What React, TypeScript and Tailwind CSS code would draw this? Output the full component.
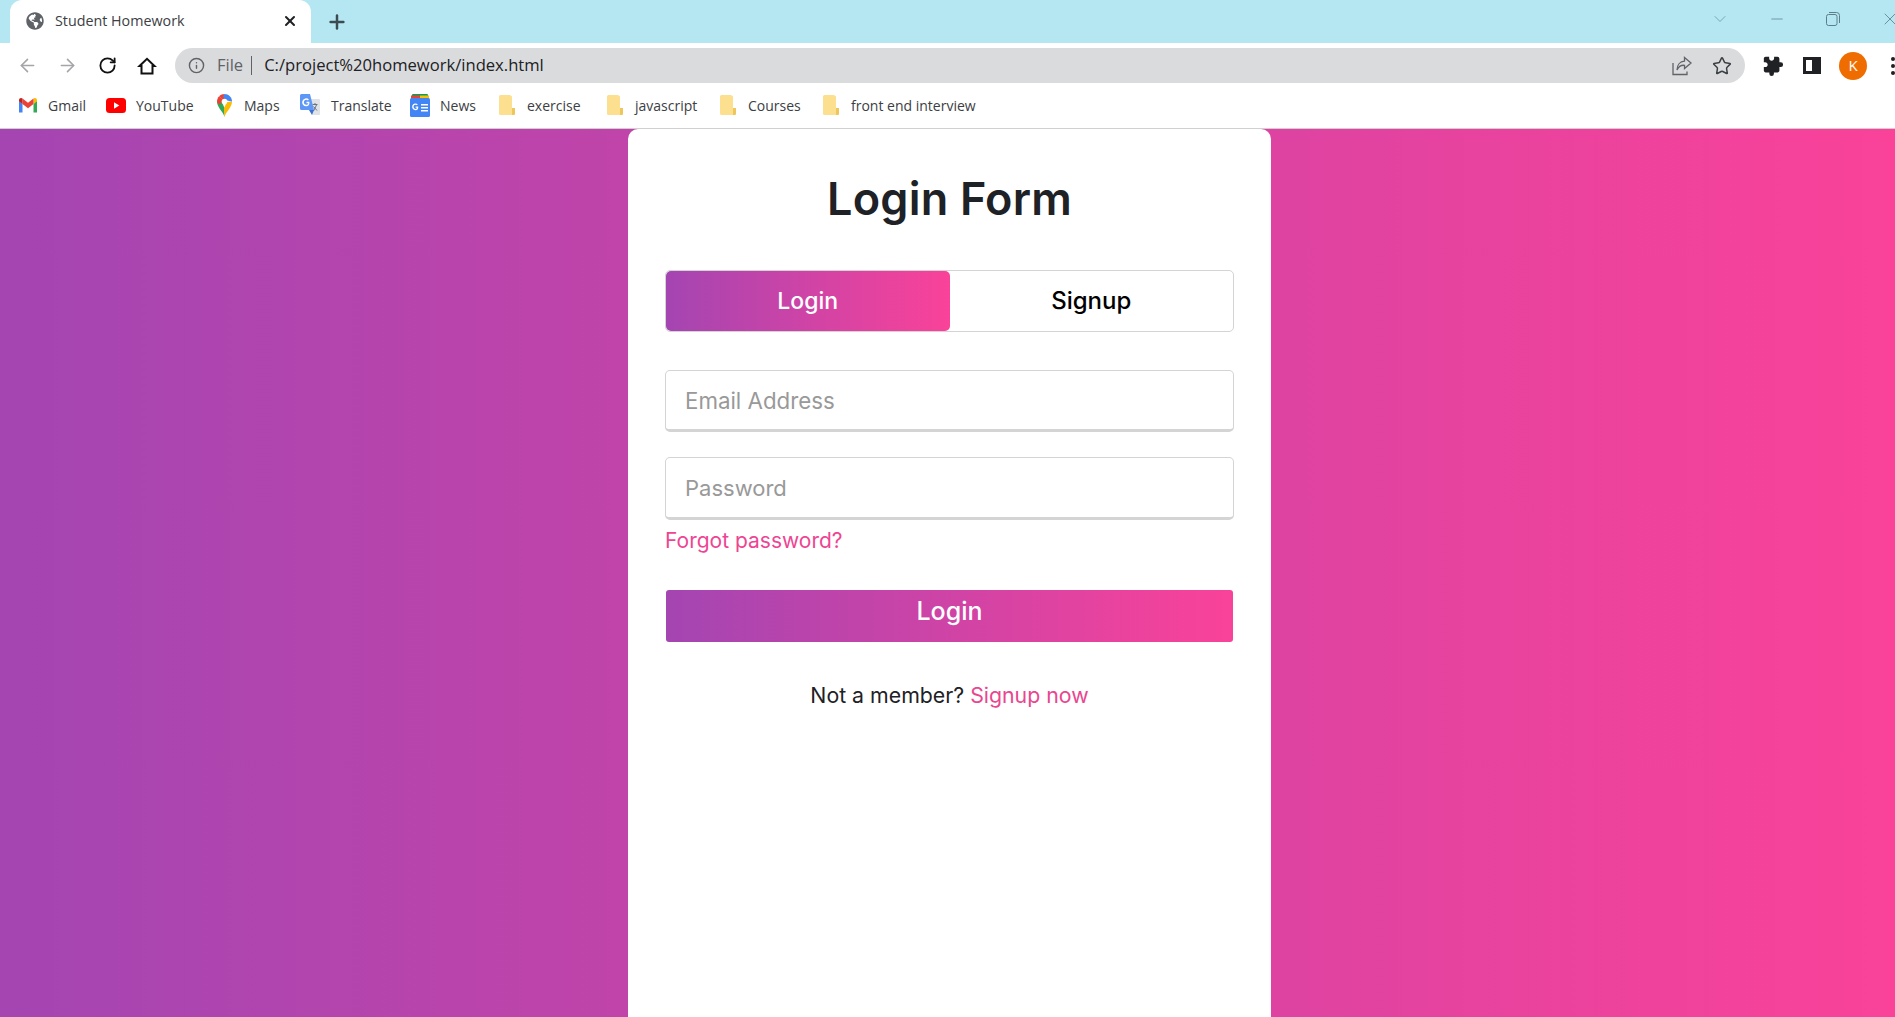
import React from "react";
import { ArrowLeft, ArrowRight, RotateCw, Plus, X, Star, ChevronDown, Minus, Info } from "lucide-react";
import { FaGlobeAmericas } from "react-icons/fa";
import { MdExtension } from "react-icons/md";

const Gmail = () => (
  <svg width="20" height="16" viewBox="0 0 20 16">
    <path d="M1 15.500h3.500V7L1 3.500Z" fill="#4285F4" />
    <path d="M15.500 15.500H19V3.500L15.500 7Z" fill="#34A853" />
    <path d="M15.500 1.500V7L19 4.300V3C19 1.200 16.900 0.300 15.500 1.500Z" fill="#FBBC04" />
    <path d="M4.500 7V1.500L10 5.700 15.500 1.500V7L10 11.200Z" fill="#EA4335" />
    <path d="M1 3V4.300L4.500 7V1.500C3.100 0.300 1 1.200 1 3Z" fill="#C5221F" />
  </svg>
);
const YouTube = () => (
  <svg width="20" height="15" viewBox="0 0 20 15">
    <rect width="20" height="15" rx="3.500" fill="#F00" />
    <path d="M8 4.300v6.400l5.300-3.200Z" fill="#fff" />
  </svg>
);
const Maps = () => (
  <svg width="15" height="23" viewBox="0 0 15 23">
    <path d="M7.500 23C6.500 18 0 13.500 0 7.500L3.500 5 7.500 14Z" fill="#34A853" />
    <path d="M7.500 23C8.500 18 15 13.500 15 7.500L10 8 7 14Z" fill="#FBBC04" />
    <path d="M0 7.500C0 5.500.8 3.700 2.200 2.300L5.800 6 3 10.500C1 9.800 0 8.500 0 7.500Z" fill="#EA4335" />
    <path d="M2.200 2.300C3.500.9 5.400 0 7.500 0L9 5 5.500 6Z" fill="#EA4335" />
    <path d="M7.500 0C11.600 0 15 3.400 15 7.500L10 6.500 6 3Z" fill="#4285F4" />
    <circle cx="7.500" cy="7.500" r="2.800" fill="#fff" />
  </svg>
);
const Translate = () => (
  <svg width="20" height="22" viewBox="0 0 20 22">
    <path d="M8 5h11a1 1 0 0 1 1 1v14a1 1 0 0 1-1 1h-7Z" fill="#dfe3e8" />
    <path d="M12.500 10.500h5M15 9v1.500M13.500 17l3-6M13.500 12.500l3.500 4" stroke="#6b7280" strokeWidth="1" fill="none" />
    <path d="M1.500 0H10l4 16H1.500A1.500 1.500 0 0 1 0 14.500v-13A1.500 1.500 0 0 1 1.500 0Z" fill="#5E97F6" />
    <path d="M9 16l3 5 2-5Z" fill="#3b6fd1" />
    <path d="M9.200 7.800H6.500v1.500h1.800c-.2 1-1 1.500-1.900 1.500a2.500 2.500 0 0 1 0-5c.6 0 1.100.2 1.500.6l1-1a4 4 0 1 0-2.500 6.900c2.200 0 3.300-1.700 3-4.500Z" fill="#fff" />
  </svg>
);
const News = () => (
  <svg width="20" height="23" viewBox="0 0 20 23">
    <rect x="2" y="0" width="16" height="6" rx="1" fill="#0C9D58" />
    <rect x="1" y="1.500" width="9" height="6" fill="#EA4335" />
    <rect x="10" y="1.500" width="9" height="6" fill="#FBBC04" />
    <rect x="0" y="4" width="20" height="19" rx="1.500" fill="#4285F4" />
    <path d="M8.500 12.500H5.600v1.300h1.500c-.2.800-.8 1.100-1.500 1.100a2.100 2.100 0 0 1 0-4.200c.5 0 1 .2 1.300.5l.9-.9a3.400 3.400 0 1 0-2.200 5.900c2 0 3-1.500 2.600-3.700Z" fill="#fff" />
    <path d="M11 10h7v1.400h-7ZM11 13h7v1.400h-7ZM11 16h7v1.400h-7Z" fill="#fff" />
  </svg>
);
const Folder = () => (
  <svg width="16" height="20" viewBox="0 0 16 20">
    <path d="M1.500 0h9.500l2 1.500V13H16v5.500a1.500 1.500 0 0 1-1.500 1.500h-13A1.500 1.500 0 0 1 0 18.500v-17A1.500 1.500 0 0 1 1.500 0Z" fill="#FCE08F" />
    <path d="M13 13h3v5.500a1.500 1.500 0 0 1-1.500 1.500H13Z" fill="#EFC65C" />
  </svg>
);
const Home = () => (
  <svg width="20" height="20" viewBox="0 0 20 20" fill="none" stroke="#111" strokeWidth="2" strokeLinejoin="miter">
    <path d="M2.500 10 10 2.800 17.500 10H15.500V17.500H4.500V10Z" />
  </svg>
);
const Share = () => (
  <svg width="20" height="20" viewBox="0 0 20 20" fill="none" stroke="#5f6368" strokeWidth="1.300">
    <path d="M1 7v11.500h14v-3" />
    <path d="M12.500 1.500 19 7l-6.500 5.500V9.300C9 9 6.500 10.500 5 14c0-5 3-8.500 7.500-8.800Z" />
  </svg>
);
const Panel = () => (
  <div className="flex h-[17px] w-[18px] border-[3px] border-[#202124] bg-white">
    <div className="ml-auto h-full w-[6px] bg-[#202124]" />
  </div>
);
const Restore = () => (
  <svg width="14" height="14" viewBox="0 0 14 14" fill="none" stroke="#5b7f8a" strokeWidth="1">
    <rect x="0.500" y="2.500" width="10.500" height="11" rx="2" />
    <path d="M3 .5h7.500a3 3 0 0 1 3 3V11" />
  </svg>
);

const bookmarks = [
  { icon: <Gmail />, label: "Gmail", iconBox: "ml-[18px] w-[20px]", gap: "ml-[10px]", w: "w-[38px]" },
  { icon: <YouTube />, label: "YouTube", iconBox: "ml-[20px] w-[20px]", gap: "ml-[10px]", w: "w-[58px]" },
  { icon: <Maps />, label: "Maps", iconBox: "ml-[20px] w-[20px]", gap: "ml-[10px]", w: "w-[36px]" },
  { icon: <Translate />, label: "Translate", iconBox: "ml-[20px] w-[20px]", gap: "ml-[11px]", w: "w-[59px]" },
  { icon: <News />, label: "News", iconBox: "ml-[20px] w-[20px]", gap: "ml-[10px]", w: "w-[36px]" },
  { icon: <Folder />, label: "exercise", iconBox: "ml-[22px] w-[18px]", gap: "ml-[11px]", w: "w-[54px]" },
  { icon: <Folder />, label: "javascript", iconBox: "ml-[25px] w-[18px]", gap: "ml-[11px]", w: "w-[63px]" },
  { icon: <Folder />, label: "Courses", iconBox: "ml-[21px] w-[18px]", gap: "ml-[11px]", w: "w-[53px]" },
  { icon: <Folder />, label: "front end interview", iconBox: "ml-[21px] w-[18px]", gap: "ml-[11px]", w: "w-[126px]" },
];

export default function App() {
  return (
    <div className="flex h-screen flex-col overflow-hidden bg-white font-['Open_Sans',sans-serif]">
      {/* Tab strip */}
      <div className="flex h-[43px] shrink-0 items-stretch bg-[#b5e7f3]">
        <div className="ml-[10px] flex w-[301px] items-center rounded-t-[12px] bg-white pb-[2px] pl-[16px] pr-[13px]">
          <FaGlobeAmericas className="text-[18px] text-[#5f6368]" />
          <span className="ml-[11px] flex-1 whitespace-nowrap text-[14.300px] text-[#3c4043]">Student Homework</span>
          <X size={16} strokeWidth={3} className="text-[#202124]" />
        </div>
        <div className="ml-[15px] flex items-center">
          <Plus size={22} strokeWidth={2.700} className="text-[#3c4a52]" />
        </div>
        <div className="ml-auto flex items-center pb-[6px] text-[#6f9aa6]">
          <ChevronDown size={20} strokeWidth={1} className="-translate-x-[1px]" />
          <Minus size={18} strokeWidth={1} className="ml-[37px] text-[#5b7f8a]" />
          <div className="ml-[39px] translate-x-[1px] text-[#5b7f8a]"><Restore /></div>
          <X size={20} strokeWidth={1} className="ml-[41px] -mr-[5px] text-[#5b7f8a]" />
        </div>
      </div>
      {/* Toolbar */}
      <div className="flex h-[42px] shrink-0 items-center bg-white pl-[7px] pt-[3px]">
        <div className="flex w-[40px] justify-center"><ArrowLeft size={21} strokeWidth={1.800} className="text-[#a3a5a8]" /></div>
        <div className="flex w-[40px] justify-center"><ArrowRight size={21} strokeWidth={1.800} className="text-[#a3a5a8]" /></div>
        <div className="flex w-[40px] justify-center"><RotateCw size={19} strokeWidth={2.300} className="text-[#111]" /></div>
        <div className="flex w-[40px] justify-center"><Home /></div>
        <div className="ml-[8px] flex h-[35px] flex-1 items-center rounded-full bg-[#dadbdd] pl-[13px] pr-[13px]">
          <Info size={17} strokeWidth={2} className="text-[#5f6368]" />
          <span className="ml-[12px] text-[16.500px] text-[#5f6368]">File</span>
          <div className="ml-[8px] h-[19px] w-[1px] bg-[#5f6368]" />
          <span className="ml-[12px] whitespace-nowrap text-[16.600px] text-[#202124]">C:/project%20homework/index.html</span>
          <div className="ml-auto flex items-center gap-[20px]">
            <Share />
            <Star size={20} strokeWidth={1.800} className="text-[#3c4043]" />
          </div>
        </div>
        <div className="ml-[17px] flex shrink-0 items-center">
          <MdExtension className="rotate-90 text-[22px] text-[#202124]" />
          <div className="ml-[19px]"><Panel /></div>
          <div className="ml-[18px] flex h-[28px] w-[28px] items-center justify-center rounded-full bg-[#ef6c00] text-[15px] text-white">K</div>
          <div className="ml-[24px] flex w-[4px] flex-col gap-[3px]">
            <span className="h-[4px] w-[4px] rounded-full bg-[#202124]" />
            <span className="h-[4px] w-[4px] rounded-full bg-[#202124]" />
            <span className="h-[4px] w-[4px] rounded-full bg-[#202124]" />
          </div>
        </div>
      </div>
      {/* Bookmarks */}
      <div className="flex h-[44px] shrink-0 items-center border-b border-[#d0d0d0] bg-white pb-[3px]">
        {bookmarks.map((b) => (
          <div key={b.label} className="flex items-center">
            <div className={`flex justify-center ${b.iconBox}`}>{b.icon}</div>
            <span className={`whitespace-nowrap text-[14px] text-[#3c4043] ${b.gap} ${b.w}`}>{b.label}</span>
          </div>
        ))}
      </div>
      {/* Page */}
      <div className="flex min-h-0 flex-1 justify-center bg-[linear-gradient(to_right,#a445b2,#fa4299)] pl-[4px]">
        <div className="flex w-[643px] flex-col rounded-t-[10px] bg-white px-[37px] font-['Inter',sans-serif]">
          <h1 className="mt-[42px] text-center text-[45px] font-semibold leading-[56px] tracking-[0.2px] text-[#1e2125]">Login Form</h1>
          <div className="mt-[43px] flex h-[62px] rounded-[5px] border border-[#d4d4d4]">
            <div className="flex w-1/2 items-center justify-center rounded-[5px] bg-[linear-gradient(to_right,#a445b2,#fa4299)] text-[23px] font-medium text-white">Login</div>
            <div className="flex w-1/2 items-center justify-center text-[24px] font-medium text-black">Signup</div>
          </div>
          <input
            placeholder="Email Address"
            className="mt-[38px] h-[62px] rounded-[5px] border border-[#d4d4d4] border-b-[3px] pl-[19px] text-[22.300px] outline-none placeholder:text-[#999]"
          />
          <input
            placeholder="Password"
            className="mt-[25px] h-[63px] rounded-[5px] border border-[#d4d4d4] border-b-[3px] pl-[19px] text-[22px] outline-none placeholder:text-[#999]"
          />
          <a className="mt-[6px] text-[21px] leading-[30px] text-[#ee4593]">Forgot password?</a>
          <button className="mx-[1px] mt-[34px] flex h-[52px] items-start justify-center rounded-[3px] bg-[linear-gradient(to_right,#a445b2,#fa4299)] pt-[5px] text-[25px] font-medium leading-[32px] text-white">Login</button>
          <p className="mt-[38px] text-center text-[21.300px] leading-[30px] text-[#1e2125]">
            Not a member? <a className="text-[#e9468f]">Signup now</a>
          </p>
        </div>
      </div>
    </div>
  );
}
